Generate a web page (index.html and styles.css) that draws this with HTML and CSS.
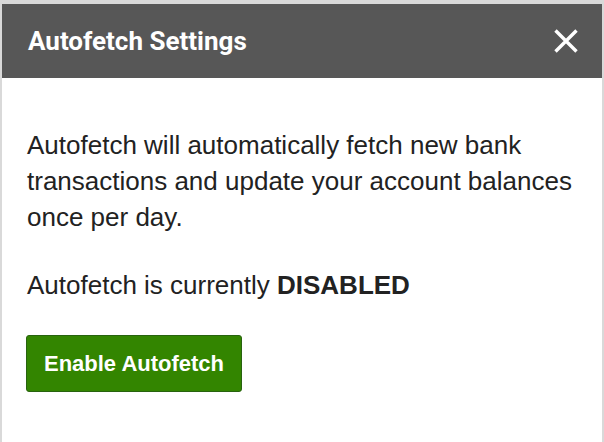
FILE: index.html
```html
<!DOCTYPE html>
<html>
<head>
<meta charset="utf-8">
<link rel="stylesheet" href="styles.css">
</head>
<body>
<div class="modal">
  <div class="modal-header">
    <h1 class="modal-title">Autofetch Settings</h1>
    <button class="close-btn" aria-label="Close">
      <svg width="24" height="24" viewBox="0 0 24 24"><path d="M1.5 1.5 L22.5 22.5 M22.5 1.5 L1.5 22.5" stroke="#fff" stroke-width="3.4" fill="none"/></svg>
    </button>
  </div>
  <div class="modal-body">
    <p class="text">Autofetch will automatically fetch new bank transactions and update your account balances once per day.</p>
    <p class="text">Autofetch is currently <strong>DISABLED</strong></p>
    <button class="enable-btn">Enable Autofetch</button>
  </div>
</div>
</body>
</html>
```
FILE: styles.css
```css
html, body {
  margin: 0;
  padding: 0;
  height: 100%;
}
body {
  background: #d9d9d9;
  padding: 4px 2px 0 2px;
  box-sizing: border-box;
}
.modal {
  background: #fff;
  height: 100%;
}
.modal-header {
  background: #575757;
  height: 74px;
  display: flex;
  align-items: center;
  justify-content: space-between;
  padding: 0 24px 0 26px;
}
.modal-title {
  margin: 0;
  font-family: Roboto, sans-serif;
  font-weight: 700;
  font-size: 26px;
  color: #fff;
}
.close-btn {
  background: none;
  border: 0;
  padding: 0;
  display: flex;
  cursor: pointer;
}
.modal-body {
  padding: 49px 24px 0 25px;
  font-family: "Liberation Sans", Arial, sans-serif;
  color: #222;
}
.text {
  margin: 0 0 32px 0;
  font-size: 26px;
  line-height: 36px;
}
.text strong {
  font-weight: 700;
}
.enable-btn {
  font-family: "Liberation Sans", Arial, sans-serif;
  font-weight: 700;
  font-size: 22px;
  color: #fff;
  background: #338500;
  border: 1px solid #28630f;
  border-radius: 3px;
  width: 216px;
  height: 57px;
  padding: 0;
  margin: 4px 0 0 -1px;
  display: block;
}
```
